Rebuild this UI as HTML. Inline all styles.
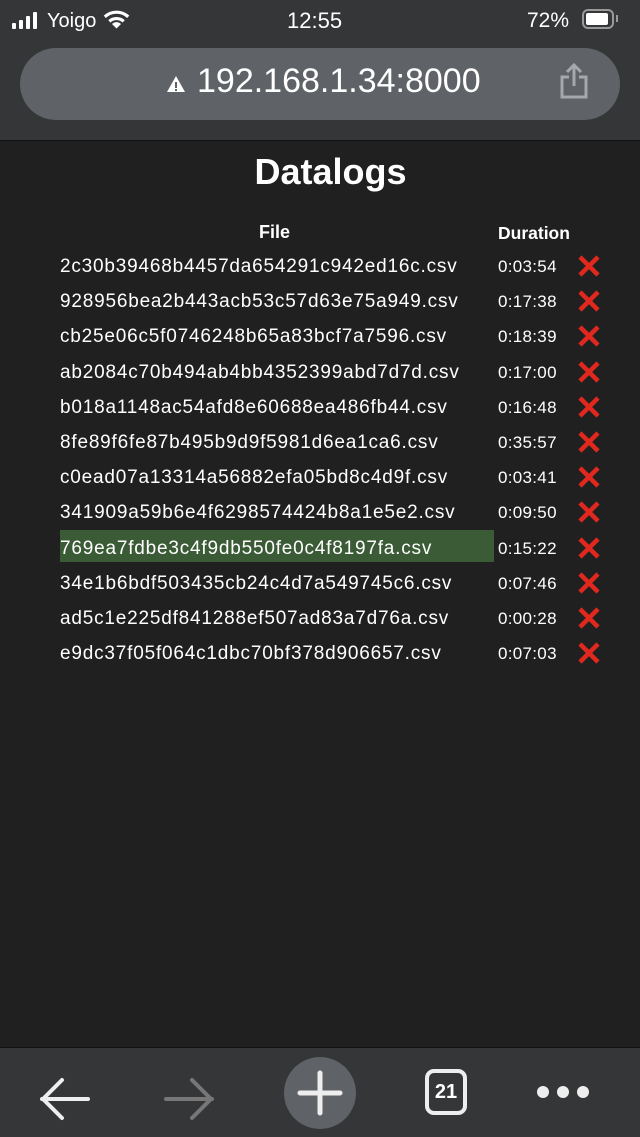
<!DOCTYPE html><html><head><style>
body{margin:0;width:640px;height:1136px;background:#202020;font-family:"Liberation Sans",sans-serif;color:#fff;position:relative;overflow:hidden}
.top{position:absolute;left:0;top:0;width:640px;height:140px;background:#353638;border-bottom:1px solid #111}
.url{position:absolute;left:20px;top:48px;width:600px;height:72px;border-radius:36px;background:#5f6266}
.bot{position:absolute;left:0;top:1047px;width:640px;height:89px;background:#353638;border-top:1px solid #111}
.row{position:absolute;left:0;width:640px;height:32px;line-height:32px}
.f{position:absolute;left:60px;font-size:19px;letter-spacing:0.8px}
.d{position:absolute;left:498px;font-size:17px;letter-spacing:0.3px;line-height:32px}
.x{position:absolute;left:578px;top:4px}
</style></head><body>
<div class="top">
<svg style="position:absolute;left:12px;top:12px" width="36" height="18"><rect x="0" y="11" width="4" height="6" rx="1" fill="#fff"/><rect x="7" y="8" width="4" height="9" rx="1" fill="#fff"/><rect x="14" y="4" width="4" height="13" rx="1" fill="#fff"/><rect x="21" y="0" width="4" height="17" rx="1" fill="#fff"/></svg>
<div style="position:absolute;left:47px;top:10px;font-size:20px">Yoigo</div>
<svg style="position:absolute;left:103px;top:9px" width="27" height="21" viewBox="0 0 30 22"><path d="M2 8 A19 19 0 0 1 28 8" stroke="#fff" stroke-width="3.5" fill="none"/><path d="M7 13 A12 12 0 0 1 23 13" stroke="#fff" stroke-width="3.5" fill="none"/><path d="M15 21 L10 16 A7 7 0 0 1 20 16Z" fill="#fff"/></svg>
<div style="position:absolute;left:287px;top:8px;font-size:22px">12:55</div>
<div style="position:absolute;left:527px;top:9px;font-size:21px">72%</div>
<div style="position:absolute;left:582px;top:9px;width:32px;height:20px;border:2px solid #999;border-radius:6px;box-sizing:border-box"><div style="margin:2px;width:22px;height:12px;background:#fff;border-radius:2px"></div></div>
<div style="position:absolute;left:616px;top:15px;width:2px;height:7px;background:#999"></div>
<div class="url"></div>
<svg style="position:absolute;left:166px;top:75px" width="20" height="18"><path d="M10 1 L19 17 L1 17Z" fill="#fff"/><rect x="9" y="7" width="2" height="6" fill="#5f6266"/><rect x="9" y="14" width="2" height="2" fill="#5f6266"/></svg>
<div style="position:absolute;left:197px;top:62px;font-size:34px">192.168.1.34:8000</div>
<svg style="position:absolute;left:558px;top:62px" width="32" height="38" viewBox="0 0 32 38"><path d="M16 3 V24 M9 10 L16 3 L23 10" stroke="#a6a8ab" stroke-width="3" fill="none"/><path d="M11 15 H4 V35 H28 V15 H21" stroke="#a6a8ab" stroke-width="3" fill="none"/></svg>
</div>
<div style="position:absolute;left:0;width:661px;top:151px;text-align:center;font-size:36px;font-weight:bold">Datalogs</div>
<div style="position:absolute;left:259px;top:222px;font-size:18px;font-weight:bold">File</div>
<div style="position:absolute;left:498px;top:223px;font-size:17.5px;font-weight:bold">Duration</div>
<div style="position:absolute;left:60px;top:530px;width:434px;height:32px;background:#3b5b36"></div>
<div id="rows"></div>
<script>
var r=[["2c30b39468b4457da654291c942ed16c.csv","0:03:54"],["928956bea2b443acb53c57d63e75a949.csv","0:17:38"],["cb25e06c5f0746248b65a83bcf7a7596.csv","0:18:39"],["ab2084c70b494ab4bb4352399abd7d7d.csv","0:17:00"],["b018a1148ac54afd8e60688ea486fb44.csv","0:16:48"],["8fe89f6fe87b495b9d9f5981d6ea1ca6.csv","0:35:57"],["c0ead07a13314a56882efa05bd8c4d9f.csv","0:03:41"],["341909a59b6e4f6298574424b8a1e5e2.csv","0:09:50"],["769ea7fdbe3c4f9db550fe0c4f8197fa.csv","0:15:22"],["34e1b6bdf503435cb24c4d7a549745c6.csv","0:07:46"],["ad5c1e225df841288ef507ad83a7d76a.csv","0:00:28"],["e9dc37f05f064c1dbc70bf378d906657.csv","0:07:03"]];
var h="";r.forEach(function(x,i){var t=251+i*35.2;h+='<div class="row" style="top:'+t+'px"><span class="f">'+x[0]+'</span><span class="d">'+x[1]+'</span><svg class="x" width="22" height="22"><path d="M2 2 L20 20 M20 2 L2 20" stroke="#e0281f" stroke-width="4.5"/></svg></div>'});
document.getElementById("rows").innerHTML=h;
</script>
<div class="bot">
<svg style="position:absolute;left:38px;top:28px" width="52" height="46"><path d="M4 23 H50 M24 4 L5 23 L24 42" stroke="#eee" stroke-width="4" fill="none" stroke-linecap="round"/></svg>
<svg style="position:absolute;left:164px;top:28px" width="52" height="46"><path d="M2 23 H48 M28 4 L47 23 L28 42" stroke="#777" stroke-width="4" fill="none" stroke-linecap="round"/></svg>
<div style="position:absolute;left:284px;top:9px;width:72px;height:72px;border-radius:50%;background:#5f6266"></div>
<svg style="position:absolute;left:296px;top:21px" width="48" height="48"><path d="M24 4 V44 M4 24 H44" stroke="#eee" stroke-width="5" stroke-linecap="round"/></svg>
<div style="position:absolute;left:425px;top:21px;width:42px;height:46px;border:4px solid #eee;border-radius:9px;box-sizing:border-box;text-align:center;font-size:20px;font-weight:bold;line-height:38px">21</div>
<svg style="position:absolute;left:535px;top:36px" width="56" height="16"><circle cx="8" cy="8" r="6" fill="#eee"/><circle cx="28" cy="8" r="6" fill="#eee"/><circle cx="48" cy="8" r="6" fill="#eee"/></svg>
</div>
</body></html>
